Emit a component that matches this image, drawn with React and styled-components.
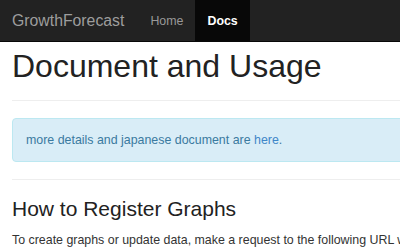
import React from "react";
import styled, { createGlobalStyle } from "styled-components";

const Global = createGlobalStyle`
  html, body { margin: 0; padding: 0; background: #fff; }
  body {
    font-family: "Liberation Sans", Arial, Helvetica, sans-serif;
    color: #333;
    overflow: hidden;
    width: 400px;
  }
`;

const Navbar = styled.nav`
  height: 41px;
  background: #222;
  border-bottom: 1px solid #080808;
  display: flex;
  align-items: stretch;
  padding-left: 12px;
`;

const Brand = styled.a`
  display: flex;
  align-items: center;
  font-size: 15.8px;
  color: #9d9d9d;
  text-decoration: none;
  margin-right: 14px;
`;

const NavItem = styled.a`
  display: flex;
  align-items: center;
  padding: 0 12px;
  font-size: 12.4px;
  text-decoration: none;
  color: ${(p) => (p.$active ? "#fff" : "#999")};
  background: ${(p) => (p.$active ? "#080808" : "transparent")};
  font-weight: ${(p) => (p.$active ? "bold" : "normal")};
`;

const Container = styled.main`
  width: 940px;
  padding: 0 12px;
`;

const Title = styled.h1`
  margin: 7px 0 0;
  font-size: 32px;
  font-weight: normal;
  line-height: 1.1;
  color: #222;
`;

const Rule = styled.hr`
  margin: ${(p) => p.$m || "16px 0 17px"};
  border: 0;
  border-top: 1px solid #eee;
  height: 0;
`;

const Alert = styled.div`
  background: #d9edf7;
  border: 1px solid #bce8f1;
  border-radius: 4px;
  color: #3a7aa0;
  font-size: 12.4px;
  line-height: 18px;
  padding: 12px 13px;
`;

const Link = styled.a`
  color: #3f86c8;
  text-decoration: none;
`;

const SubTitle = styled.h3`
  margin: 0;
  font-size: 21px;
  font-weight: normal;
  line-height: 1.1;
  color: #222;
`;

const Para = styled.p`
  margin: 11px 0 0;
  font-size: 12.4px;
  line-height: 18px;
  color: #333;
  white-space: nowrap;
`;

export default function App() {
  return (
    <>
      <Global />
      <Navbar>
        <Brand href="#">GrowthForecast</Brand>
        <NavItem href="#">Home</NavItem>
        <NavItem href="#" $active>Docs</NavItem>
      </Navbar>
      <Container>
        <Title>Document and Usage</Title>
        <Rule />
        <Alert>
          more details and japanese document are <Link href="#">here</Link>.
        </Alert>
        <Rule $m="17px 0 17px" />
        <SubTitle>How to Register Graphs</SubTitle>
        <Para>
          To create graphs or update data, make a request to the following URL with POST method.
        </Para>
      </Container>
    </>
  );
}
